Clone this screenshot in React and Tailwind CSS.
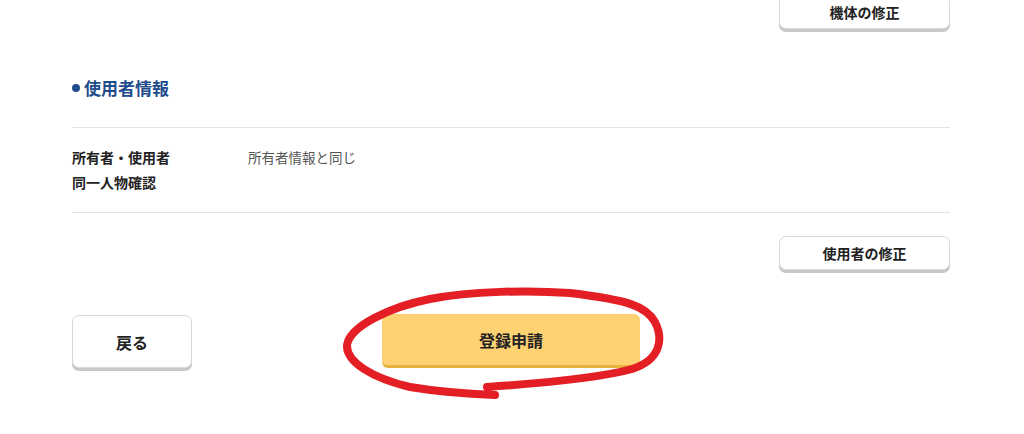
export default function App() {
  const font = { fontFamily: '"Noto Sans CJK JP", "Noto Sans", sans-serif' };
  const btn =
    "h-[34px] w-[171px] rounded-[7px] border border-[#d9d9d9] bg-white shadow-[0_3px_0_#c8c8c8] text-[14px] font-bold text-[#222] flex items-center justify-center";
  return (
    <div className="relative w-[1024px] h-[434px] overflow-hidden bg-white" style={font}>
      <div className="ml-[72px] w-[878px] flex flex-col">
        <div className="flex justify-end -mt-[5px]">
          <button className={btn}>機体の修正</button>
        </div>
        <div className="mt-[47px] flex items-center h-[24px] text-[17px] font-bold text-[#1f4d8c]">
          <span className="w-[8px] h-[8px] rounded-full bg-[#1f4d8c] mr-[4px]"></span>
          使用者情報
        </div>
        <div className="mt-[27px] border-t border-[#e3e3e3]"></div>
        <div className="flex py-[17px] leading-[25px] text-[14px]">
          <div className="w-[176px] font-bold text-[#222]">
            <div>所有者・使用者</div>
            <div>同一人物確認</div>
          </div>
          <div className="text-[#555] text-[13.5px]">所有者情報と同じ</div>
        </div>
        <div className="border-t border-[#e3e3e3]"></div>
        <div className="flex justify-end mt-[23px]">
          <button className={btn}>使用者の修正</button>
        </div>
        <div className="mt-[45px] grid grid-cols-[1fr_auto_1fr] items-start">
          <button className="justify-self-start w-[120px] h-[53px] rounded-[7px] border border-[#d9d9d9] bg-white shadow-[0_3px_0_#c8c8c8] text-[16px] font-bold text-[#222] flex items-center justify-center">
            戻る
          </button>
          <button className="-mt-[1px] w-[258px] h-[54px] rounded-[6px] bg-[#fed273] border-b-[3px] border-[#e8b33c] text-[16px] font-bold text-[#222] flex items-center justify-center">
            登録申請
          </button>
          <div></div>
        </div>
      </div>
      <svg className="absolute left-0 top-0 pointer-events-none" width="1024" height="434" viewBox="0 0 1024 434">
        <path
          d="M487 387 C530 384 600 378 632 369 C660 360 664 340 655 322 C646 306 628 300 570 293 C530 290 470 291 430 299 C390 307 350 326 347 345 C346 362 372 378 410 387 C440 392 470 394 495 395"
          fill="none"
          stroke="#e31e24"
          strokeWidth="8"
          strokeLinecap="round"
          strokeLinejoin="round"
        />
      </svg>
    </div>
  );
}
